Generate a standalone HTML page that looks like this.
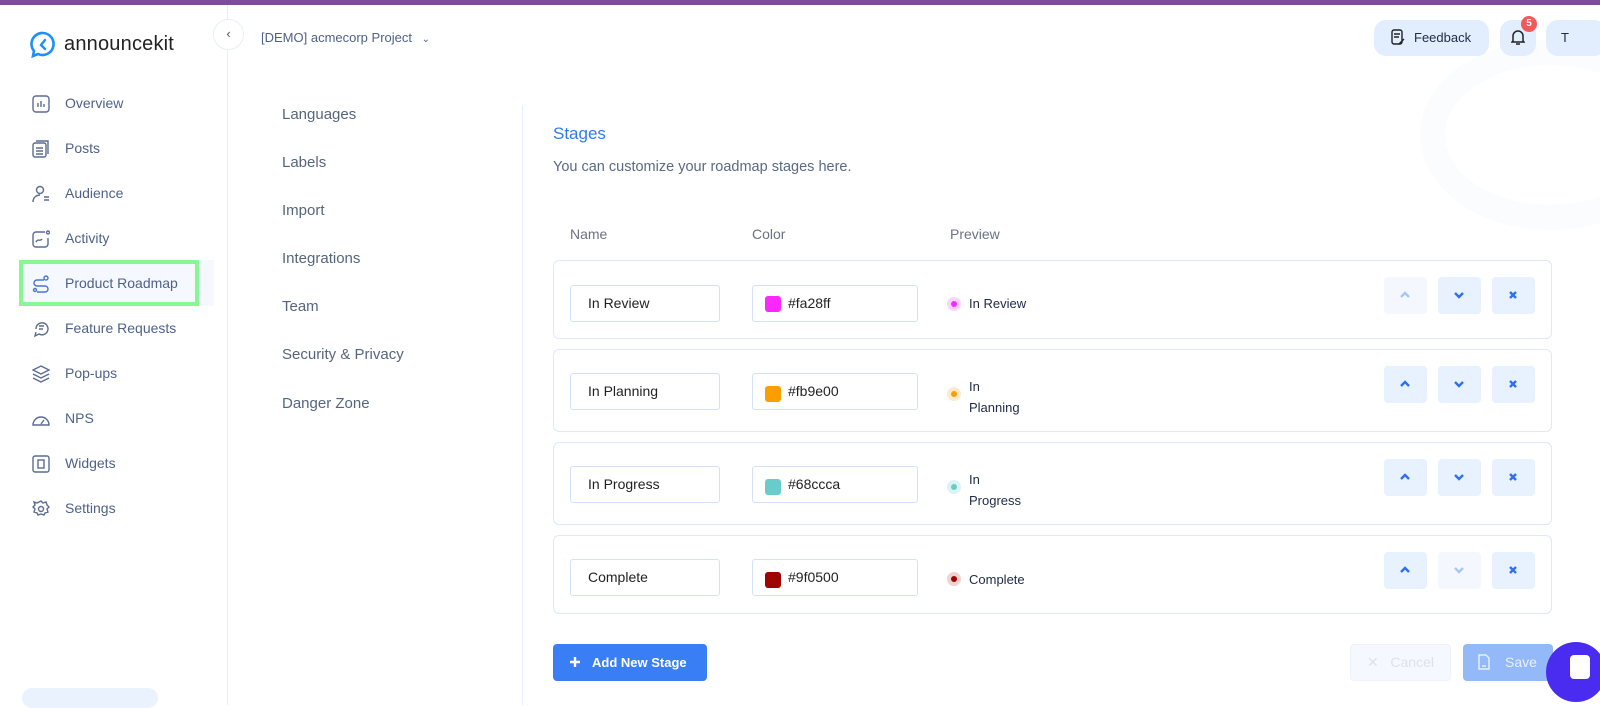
<!DOCTYPE html>
<html><head><meta charset="utf-8"><style>
*{box-sizing:border-box;margin:0;padding:0}
body{width:1600px;height:705px;overflow:hidden;background:#fff;font-family:"Liberation Sans",sans-serif;position:relative;color:#1f2a44}
.abs{position:absolute}
.topbar{left:0;top:0;width:1600px;height:5px;background:#7d4e97}
.side{left:0;top:5px;width:228px;height:700px;border-right:1px solid #e6eefb}
.nav{position:absolute;left:65px;font-size:14px;color:#4f6189;line-height:18px}
.ico{position:absolute;left:32px;width:18px;height:18px}
.menu{position:absolute;left:282px;font-size:15px;color:#56657f}
.card{position:absolute;left:553px;width:999px;border:1px solid #dfe8f8;border-radius:6px}
.inp{position:absolute;height:37px;border:1px solid #d4e1f7;border-radius:3px;font-size:14px;color:#222;line-height:35px}
.btn{position:absolute;width:43px;height:37px;border-radius:4px;background:#e8f1fe}
.btn.dis{background:#f4f8fe}
.btn svg{position:absolute;left:14px;top:11px}
</style></head><body>
<div class="abs" style="left:1420px;top:40px;width:260px;height:190px;border-radius:50%;border:25px solid #fbfcfe"></div>
<div class="abs topbar"></div>
<div class="abs side"></div>
<!-- logo -->
<svg class="abs" style="left:29px;top:31px" width="28" height="28" viewBox="0 0 28 28"><path d="M14 2a11 11 0 1 1-5 21l-5 2 1-5A11 11 0 0 1 14 2z" fill="none" stroke="#1e8ff7" stroke-width="2.6"/><path d="M16 9l-4 5 4 4" fill="none" stroke="#1e8ff7" stroke-width="2.4" stroke-linecap="round"/></svg>
<div class="abs" style="left:64px;top:33px;font-size:20px;color:#222;letter-spacing:0.2px">announcekit</div>
<div class="abs" style="left:213px;top:19px;width:31px;height:31px;border-radius:50%;border:1px solid #e6eefb;background:#fff;font-size:13px;color:#555;text-align:center;line-height:28px">‹</div>
<div class="abs" style="left:261px;top:30px;font-size:13px;color:#4f6189">[DEMO] acmecorp Project <span style="margin-left:6px;font-size:10px">⌄</span></div>

<div class="abs" style="left:19px;top:260px;width:195px;height:46px;background:#f5f8fe"></div>
<div class="abs" style="left:19px;top:260px;width:180px;height:46px;border:4px solid #86f794"></div>

<div class="nav" style="top:94px">Overview</div>
<div class="nav" style="top:139px">Posts</div>
<div class="nav" style="top:184px">Audience</div>
<div class="nav" style="top:229px">Activity</div>
<div class="nav" style="top:274px">Product Roadmap</div>
<div class="nav" style="top:319px">Feature Requests</div>
<div class="nav" style="top:364px">Pop-ups</div>
<div class="nav" style="top:409px">NPS</div>
<div class="nav" style="top:454px">Widgets</div>
<div class="nav" style="top:499px">Settings</div>
<svg class="ico" style="top:95px" viewBox="0 0 18 18" fill="none" stroke="#5a6c93" stroke-width="1.4"><rect x="1" y="1" width="16" height="16" rx="3"/><path d="M6 12V8M9 12V6M12 12V9"/></svg>
<svg class="ico" style="top:140px" viewBox="0 0 18 18" fill="none" stroke="#5a6c93" stroke-width="1.4"><rect x="1" y="3" width="13" height="14" rx="2"/><path d="M4 1h12v13M4 8h7M4 11h7M4 14h7"/></svg>
<svg class="ico" style="top:185px" viewBox="0 0 18 18" fill="none" stroke="#5a6c93" stroke-width="1.4"><circle cx="8" cy="5" r="3.5"/><path d="M1 17c0-5 4-7 7-7M12 12h5M12 15h5"/></svg>
<svg class="ico" style="top:230px" viewBox="0 0 18 18" fill="none" stroke="#5a6c93" stroke-width="1.4"><path d="M13 2H4a3 3 0 0 0-3 3v9a3 3 0 0 0 3 3h9a3 3 0 0 0 3-3V8"/><circle cx="16" cy="2.5" r="1.5"/><path d="M4 12c2-4 4 0 6-3"/></svg>
<svg class="ico" style="top:275px" viewBox="0 0 18 18" fill="none" stroke="#4a72d8" stroke-width="1.4"><circle cx="14" cy="3" r="2"/><path d="M12 5H5a3 3 0 0 0 0 6h8a3 3 0 0 1 0 6H5"/><circle cx="3" cy="15" r="1.5"/></svg>
<svg class="ico" style="top:320px" viewBox="0 0 18 18" fill="none" stroke="#5a6c93" stroke-width="1.4"><path d="M4 9a6 6 0 1 1 3 5l-4 2 1-4"/><path d="M7 6h5M7 9h4"/></svg>
<svg class="ico" style="top:365px" viewBox="0 0 18 18" fill="none" stroke="#5a6c93" stroke-width="1.4"><path d="M9 1l8 4-8 4-8-4zM1 9l8 4 8-4M1 13l8 4 8-4"/></svg>
<svg class="ico" style="top:410px" viewBox="0 0 18 18" fill="none" stroke="#5a6c93" stroke-width="1.4"><path d="M1 15a8 8 0 0 1 16 0zM9 14l3-4"/></svg>
<svg class="ico" style="top:455px" viewBox="0 0 18 18" fill="none" stroke="#5a6c93" stroke-width="1.4"><rect x="1" y="1" width="16" height="16" rx="2"/><rect x="6" y="5" width="6" height="8"/></svg>
<svg class="ico" style="top:500px" viewBox="0 0 18 18" fill="none" stroke="#5a6c93" stroke-width="1.4"><circle cx="9" cy="9" r="2.5"/><path d="M9 1l2 2 3-1 1 3 2 2-2 2 1 3-3 1-1 2-3-1-3 1-1-2-3-1 1-3-2-2 2-2-1-3 3 1z"/></svg>
<div class="abs" style="left:22px;top:688px;width:136px;height:20px;border-radius:10px;background:#eaf2fe"></div>

<div class="abs" style="left:522px;top:105px;width:1px;height:600px;background:#e6eefb"></div>
<div class="menu" style="top:106px">Languages</div>
<div class="menu" style="top:154px">Labels</div>
<div class="menu" style="top:202px">Import</div>
<div class="menu" style="top:250px">Integrations</div>
<div class="menu" style="top:298px">Team</div>
<div class="menu" style="top:346px">Security &amp; Privacy</div>
<div class="menu" style="top:395px">Danger Zone</div>

<!-- top right -->
<div class="abs" style="left:1374px;top:20px;width:115px;height:36px;border-radius:12px;background:#e2edfd;font-size:13px;color:#1f2a44;line-height:36px;padding-left:40px">Feedback</div>
<svg class="abs" style="left:1391px;top:29px" width="14" height="17" viewBox="0 0 14 17" fill="none" stroke="#222" stroke-width="1.4"><rect x="1" y="1" width="10" height="14" rx="2"/><path d="M3 5h6M3 8h5M8 15l5-5"/></svg>
<div class="abs" style="left:1500px;top:20px;width:36px;height:36px;border-radius:12px;background:#e2edfd"></div>
<svg class="abs" style="left:1511px;top:28px" width="14" height="18" viewBox="0 0 14 18" fill="none" stroke="#222" stroke-width="1.5"><path d="M2 13V8a5 5 0 0 1 10 0v5l1 1H1zM5 16h4"/></svg>
<div class="abs" style="left:1521px;top:16px;width:16px;height:16px;border-radius:50%;background:#f25a5a;color:#fff;font-size:10px;font-weight:bold;text-align:center;line-height:16px">5</div>
<div class="abs" style="left:1546px;top:20px;width:60px;height:36px;border-radius:12px;background:#e2edfd;font-size:13px;line-height:36px;padding-left:15px">T</div>

<div class="abs" style="left:553px;top:124px;font-size:17px;color:#2f7bf5">Stages</div>
<div class="abs" style="left:553px;top:159px;font-size:14.5px;color:#5a6a85">You can customize your roadmap stages here.</div>
<div class="abs" style="left:570px;top:226px;font-size:14px;color:#6b7280">Name</div>
<div class="abs" style="left:752px;top:226px;font-size:14px;color:#6b7280">Color</div>
<div class="abs" style="left:950px;top:226px;font-size:14px;color:#6b7280">Preview</div>

<!-- rows -->
<div class="card" style="top:260px;height:79px"></div>
<div class="card" style="top:349px;height:83px"></div>
<div class="card" style="top:442px;height:83px"></div>
<div class="card" style="top:535px;height:79px"></div>

<div class="inp" style="left:570px;top:285px;width:150px;padding-left:17px">In Review</div>
<div class="inp" style="left:752px;top:285px;width:166px;padding-left:35px">#fa28ff</div>
<div class="abs" style="left:765px;top:296px;width:16px;height:16px;border-radius:3px;background:#fa28ff"></div>
<div class="abs" style="left:947px;top:297px;width:14px;height:14px;border-radius:50%;background:#fdd2ff"></div><div class="abs" style="left:951px;top:301px;width:6px;height:6px;border-radius:50%;background:#fa28ff"></div>
<div class="abs" style="left:969px;top:296px;font-size:13px;color:#1f2a44">In Review</div>

<div class="inp" style="left:570px;top:373px;width:150px;padding-left:17px">In Planning</div>
<div class="inp" style="left:752px;top:373px;width:166px;padding-left:35px">#fb9e00</div>
<div class="abs" style="left:765px;top:386px;width:16px;height:16px;border-radius:3px;background:#fb9e00"></div>
<div class="abs" style="left:947px;top:387px;width:14px;height:14px;border-radius:50%;background:#feeacc"></div><div class="abs" style="left:951px;top:391px;width:6px;height:6px;border-radius:50%;background:#fb9e00"></div>
<div class="abs" style="left:969px;top:376px;font-size:13px;line-height:21px;color:#1f2a44">In<br>Planning</div>

<div class="inp" style="left:570px;top:466px;width:150px;padding-left:17px">In Progress</div>
<div class="inp" style="left:752px;top:466px;width:166px;padding-left:35px">#68ccca</div>
<div class="abs" style="left:765px;top:479px;width:16px;height:16px;border-radius:3px;background:#68ccca"></div>
<div class="abs" style="left:947px;top:480px;width:14px;height:14px;border-radius:50%;background:#dcf3f3"></div><div class="abs" style="left:951px;top:484px;width:6px;height:6px;border-radius:50%;background:#68ccca"></div>
<div class="abs" style="left:969px;top:469px;font-size:13px;line-height:21px;color:#1f2a44">In<br>Progress</div>

<div class="inp" style="left:570px;top:559px;width:150px;padding-left:17px">Complete</div>
<div class="inp" style="left:752px;top:559px;width:166px;padding-left:35px">#9f0500</div>
<div class="abs" style="left:765px;top:572px;width:16px;height:16px;border-radius:3px;background:#9f0500"></div>
<div class="abs" style="left:947px;top:572px;width:14px;height:14px;border-radius:50%;background:#f0d2d2"></div><div class="abs" style="left:951px;top:576px;width:6px;height:6px;border-radius:50%;background:#9f0500"></div>
<div class="abs" style="left:969px;top:572px;font-size:13px;color:#1f2a44">Complete</div>

<!-- buttons -->
<div class="btn dis" style="left:1384px;top:277px"><svg width="14" height="14" viewBox="0 0 14 14"><path d="M3 9l4-4 4 4" fill="none" stroke="#a9c6f9" stroke-width="2.4"/></svg></div>
<div class="btn" style="left:1438px;top:277px"><svg width="14" height="14" viewBox="0 0 14 14"><path d="M3 5l4 4 4-4" fill="none" stroke="#2f6ff0" stroke-width="2.4"/></svg></div>
<div class="btn" style="left:1492px;top:277px"><svg width="14" height="14" viewBox="0 0 14 14"><path d="M4 4l6 6M10 4l-6 6" fill="none" stroke="#2f6ff0" stroke-width="2.4"/></svg></div>

<div class="btn" style="left:1384px;top:366px"><svg width="14" height="14" viewBox="0 0 14 14"><path d="M3 9l4-4 4 4" fill="none" stroke="#2f6ff0" stroke-width="2.4"/></svg></div>
<div class="btn" style="left:1438px;top:366px"><svg width="14" height="14" viewBox="0 0 14 14"><path d="M3 5l4 4 4-4" fill="none" stroke="#2f6ff0" stroke-width="2.4"/></svg></div>
<div class="btn" style="left:1492px;top:366px"><svg width="14" height="14" viewBox="0 0 14 14"><path d="M4 4l6 6M10 4l-6 6" fill="none" stroke="#2f6ff0" stroke-width="2.4"/></svg></div>

<div class="btn" style="left:1384px;top:459px"><svg width="14" height="14" viewBox="0 0 14 14"><path d="M3 9l4-4 4 4" fill="none" stroke="#2f6ff0" stroke-width="2.4"/></svg></div>
<div class="btn" style="left:1438px;top:459px"><svg width="14" height="14" viewBox="0 0 14 14"><path d="M3 5l4 4 4-4" fill="none" stroke="#2f6ff0" stroke-width="2.4"/></svg></div>
<div class="btn" style="left:1492px;top:459px"><svg width="14" height="14" viewBox="0 0 14 14"><path d="M4 4l6 6M10 4l-6 6" fill="none" stroke="#2f6ff0" stroke-width="2.4"/></svg></div>

<div class="btn" style="left:1384px;top:552px"><svg width="14" height="14" viewBox="0 0 14 14"><path d="M3 9l4-4 4 4" fill="none" stroke="#2f6ff0" stroke-width="2.4"/></svg></div>
<div class="btn dis" style="left:1438px;top:552px"><svg width="14" height="14" viewBox="0 0 14 14"><path d="M3 5l4 4 4-4" fill="none" stroke="#a9c6f9" stroke-width="2.4"/></svg></div>
<div class="btn" style="left:1492px;top:552px"><svg width="14" height="14" viewBox="0 0 14 14"><path d="M4 4l6 6M10 4l-6 6" fill="none" stroke="#2f6ff0" stroke-width="2.4"/></svg></div>

<!-- bottom -->
<div class="abs" style="left:553px;top:644px;width:154px;height:37px;border-radius:4px;background:#3a7ef6;color:#fff;font-size:13px;font-weight:bold;line-height:37px;padding-left:39px">Add New Stage</div>
<svg class="abs" style="left:569px;top:656px" width="12" height="12" viewBox="0 0 12 12"><path d="M6 1v10M1 6h10" stroke="#fff" stroke-width="2.4"/></svg>
<div class="abs" style="left:1350px;top:644px;width:101px;height:37px;border-radius:4px;background:#f5f8fe;border:1px solid #edf2fb;color:#dde2ea;font-size:14px;line-height:35px;padding-left:16px">✕&nbsp;&nbsp;&nbsp;Cancel</div>
<div class="abs" style="left:1463px;top:644px;width:90px;height:37px;border-radius:4px;background:#93b9f9;color:#e6efff;font-size:14px;line-height:37px;padding-left:42px">Save</div>
<svg class="abs" style="left:1478px;top:654px" width="12" height="16" viewBox="0 0 12 16" fill="none" stroke="#e6efff" stroke-width="1.4"><path d="M1 1h7l3 3v11H1zM4 12h4"/></svg>
<div class="abs" style="left:1546px;top:642px;width:60px;height:60px;border-radius:50%;background:#4a2cf0"></div>
<div class="abs" style="left:1570px;top:655px;width:20px;height:24px;border-radius:4px;background:#fff"></div>
</body></html>
